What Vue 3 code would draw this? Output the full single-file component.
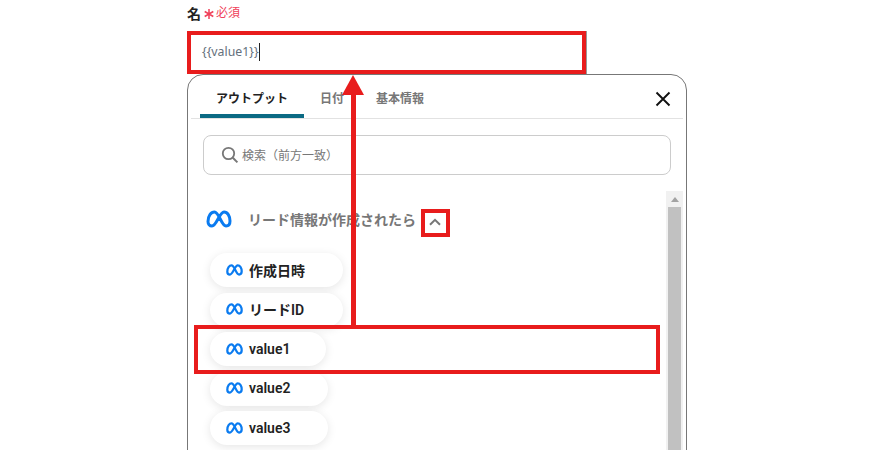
<script setup>
const tabs = [
  { label: 'アウトプット', active: true, cls: 'tab-a' },
  { label: '日付', active: false, cls: 'tab-b' },
  { label: '基本情報', active: false, cls: 'tab-c' },
]
const items = [
  { label: '作成日時', width: 133 },
  { label: 'リードID', width: 133 },
  { label: 'value1', width: 116 },
  { label: 'value2', width: 118 },
  { label: 'value3', width: 118 },
]
const metaPath = 'M2 11.500C2 6 5 2 8.500 2C13 2 15.500 16 20 16C22.500 16 24 14 24 11C24 6 21.500 2 18 2C13.500 2 10.500 16 6 16C3.500 16 2 14 2 11.500Z'
</script>

<template>
  <div class="page">
    <div class="label-row">
      <span class="label">名</span>
      <svg class="star" width="10" height="10" viewBox="0 0 10 10">
        <path d="M5 0v10M.7 2.500l8.600 5M.7 7.500l8.600-5" stroke="#f0415a" stroke-width="1.500" fill="none" />
      </svg>
      <span class="req">必須</span>
    </div>
    <div class="input"><span>{{ '{' + '{value1}' + '}' }}</span><i class="caret"></i></div>

    <section class="panel">
      <header class="tabs">
        <div v-for="t in tabs" :key="t.label" class="tab" :class="[t.cls, { active: t.active }]">{{ t.label }}</div>
        <svg class="close" width="16" height="16" viewBox="0 0 16 16">
          <path d="M1.500 1.500l13 13M14.500 1.500l-13 13" stroke="#111" stroke-width="1.900" fill="none" />
        </svg>
      </header>

      <div class="search-wrap">
        <div class="search">
          <svg width="18" height="18" viewBox="0 0 18 18">
            <circle cx="7.500" cy="7.500" r="5.700" stroke="#777" stroke-width="1.800" fill="none" />
            <path d="M11.800 11.800l4.600 4.600" stroke="#777" stroke-width="2" fill="none" />
          </svg>
          <span>検索（前方一致）</span>
        </div>
      </div>

      <div class="body">
        <div class="list">
          <div class="section">
            <svg width="26" height="18" viewBox="0 0 26 18">
              <path :d="metaPath" stroke="#0a7bf0" stroke-width="3" fill="none" />
            </svg>
            <span class="section-title">リード情報が作成されたら</span>
            <svg class="chev" width="12" height="8" viewBox="0 0 12 8">
              <path d="M1 6.800L6 1.800l5 5" stroke="#777" stroke-width="2" fill="none" />
            </svg>
          </div>
          <div class="pills">
            <div v-for="item in items" :key="item.label" class="pill" :style="{ width: item.width + 'px' }">
              <svg width="17" height="12" viewBox="0 0 26 18">
                <path :d="metaPath" stroke="#0a7bf0" stroke-width="3.400" fill="none" />
              </svg>
              <span>{{ item.label }}</span>
            </div>
          </div>
        </div>
        <div class="scrollbar">
          <div class="arrow"></div>
          <div class="thumb"></div>
        </div>
      </div>
    </section>

    <div class="mark mark-input"></div>
    <div class="mark mark-chev"></div>
    <div class="mark mark-row"></div>
    <div class="arrow-line"></div>
    <div class="arrow-head"></div>
  </div>
</template>

<style>
html, body { margin: 0; overflow: hidden; background: #fff; }
</style>

<style scoped>
.page {
  position: relative;
  width: 888px;
  height: 450px;
  overflow: hidden;
  background: #fff;
  padding: 2px 0 0 187px;
  box-sizing: border-box;
  font-family: "Noto Sans", "Noto Sans CJK JP", sans-serif;
  color: #222;
}
.label-row { display: flex; align-items: center; height: 21px; }
.label { font-size: 14px; font-weight: 700; color: #222; }
.star { margin: 3px 2px 0 3px; }
.req { color: #f0415a; font-size: 12px; margin-top: -1px; }
.input {
  width: 400px;
  height: 43px;
  margin-top: 8px;
  box-sizing: border-box;
  padding: 0 0 2px 15px;
  display: flex;
  align-items: center;
  font-size: 12.300px;
  color: #64707c;
  border-right: 1px solid #999;
}
.caret { display: inline-block; width: 1px; height: 18px; background: #222; margin-left: 0; }
.panel {
  width: 500px;
  height: 420px;
  box-sizing: border-box;
  border: 1px solid #777;
  border-radius: 16px 16px 0 0;
  background: #fff;
  padding: 0 3px;
}
.tabs {
  position: relative;
  display: flex;
  height: 43px;
  border-bottom: 1px solid #e2e2e2;
  align-items: center;
  padding-left: 9px;
}
.tab { font-size: 12px; color: #777; font-weight: 700; height: 43px; line-height: 47px; box-sizing: border-box; }
.tab-a { width: 104px; text-align: center; color: #222; border-bottom: 4px solid #0b6a84; border-radius: 4px 4px 0 0; }
.tab-b { margin-left: 16px; width: 40px; }
.tab-c { margin-left: 16px; }
.close { margin-left: auto; margin-right: 12px; margin-top: 5px; }
.search-wrap { padding: 16px 12px 0 12px; }
.search {
  height: 40px;
  box-sizing: border-box;
  border: 1px solid #ccc;
  border-radius: 8px;
  display: flex;
  align-items: center;
  padding-left: 17px;
  gap: 3px;
  font-size: 12px;
  color: #777;
}
.body { display: flex; margin-top: 16px; }
.list { flex: 1; padding-left: 15px; }
.section { display: flex; align-items: center; height: 28px; margin-top: 14px; }
.section-title { font-size: 14px; font-weight: 700; color: #777; margin-left: 16px; }
.chev { margin-left: 13px; margin-top: 5px; }
.pills { display: flex; flex-direction: column; gap: 5.500px; margin-top: 20px; padding-left: 4px; }
.pill {
  flex: none;
  height: 34px;
  box-sizing: border-box;
  border-radius: 17px;
  background: #fff;
  box-shadow: 0 2px 10px rgba(0, 0, 0, 0.1);
  display: flex;
  align-items: center;
  padding: 0 0 1px 16px;
  gap: 6px;
  font-family: Roboto, "Noto Sans CJK JP", sans-serif;
  font-size: 14px;
  font-weight: 600;
  color: #222;
}
.scrollbar { width: 17px; height: 300px; background: #f1f1f1; flex: none; padding: 0 2px; box-sizing: border-box; }
.arrow { width: 0; height: 0; margin: 6px auto 5px; border: 4px solid transparent; border-top: 0; border-bottom: 5px solid #a3a3a3; }
.thumb { height: 280px; background: #c1c1c1; margin-top: 0; }

/* Annotation overlays */
.mark { position: absolute; box-sizing: border-box; border: 4px solid #e81c1c; }
.mark-input { left: 187px; top: 31px; width: 399px; height: 43px; }
.mark-chev { left: 421px; top: 209px; width: 29px; height: 28px; }
.mark-row { left: 194px; top: 325px; width: 466px; height: 49px; }
.arrow-line { position: absolute; left: 351px; top: 90px; width: 5px; height: 236px; background: #e81c1c; }
.arrow-head {
  position: absolute;
  left: 342px;
  top: 75px;
  width: 0;
  height: 0;
  border-left: 11px solid transparent;
  border-right: 11px solid transparent;
  border-bottom: 20px solid #e81c1c;
}
</style>
